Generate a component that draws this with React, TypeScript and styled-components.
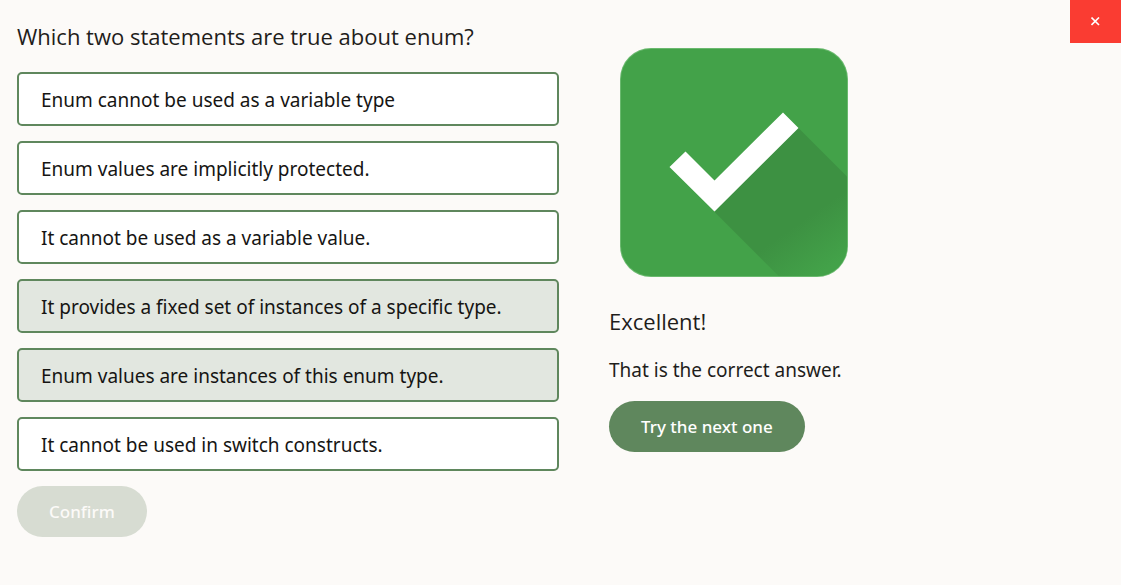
import React, { useState } from "react";
import styled, { createGlobalStyle } from "styled-components";

const GlobalStyle = createGlobalStyle`
  *, *::before, *::after { box-sizing: border-box; }
  body {
    margin: 0;
    background: #fcfaf8;
    color: #1f1d1b;
    font-family: "Noto Sans", "Open Sans", sans-serif;
  }
`;

const Page = styled.main`
  position: relative;
  display: grid;
  grid-template-columns: 542fr 462fr;
  column-gap: 50px;
  align-items: start;
  padding: 20px 50px 48px 17px;
`;

const CloseButton = styled.button`
  position: absolute;
  top: 0;
  right: 0;
  display: flex;
  align-items: center;
  justify-content: center;
  width: 51px;
  height: 43px;
  padding: 0;
  border: 0;
  background: #fa3c32;
  color: #fff;
  cursor: pointer;
`;

const Question = styled.section`
  display: flex;
  flex-direction: column;
  align-items: flex-start;
`;

const Title = styled.h1`
  margin: 0 0 20px;
  font-family: "Open Sans", "Noto Sans", sans-serif;
  font-size: 22px;
  line-height: 32px;
  font-weight: 400;
`;

const Options = styled.div`
  display: grid;
  gap: 15px;
  width: 100%;
  margin-bottom: 15px;
`;

const Option = styled.button<{ $selected: boolean }>`
  padding: 11px 22px 9px;
  border: 2px solid #5f875d;
  border-radius: 5px;
  background: ${(p) => (p.$selected ? "#e2e7e0" : "#fff")};
  color: #161513;
  font-family: inherit;
  font-size: 19px;
  line-height: 30px;
  text-align: left;
  cursor: pointer;
`;

const PillButton = styled.button`
  padding: 12px 32px;
  border: 0;
  border-radius: 26px;
  background: #5f875d;
  color: #fff;
  font-family: inherit;
  font-size: 17px;
  line-height: 27px;
  font-weight: 500;
  cursor: pointer;

  &:disabled {
    background: #d7dcd2;
    color: #fcfaf8;
    cursor: default;
  }
`;

const Result = styled.section`
  display: flex;
  flex-direction: column;
  align-items: flex-start;
  padding-top: 28px;
`;

const Badge = styled.svg`
  display: block;
  width: 228px;
  height: 229px;
  margin: 0 0 28px 11px;
`;

const ResultTitle = styled(Title).attrs({ as: "h2" })`
  margin-bottom: 18px;
`;

const ResultText = styled.p`
  margin: 0 0 16px;
  font-size: 19px;
  line-height: 30px;
`;

const options = [
  "Enum cannot be used as a variable type",
  "Enum values are implicitly protected.",
  "It cannot be used as a variable value.",
  "It provides a fixed set of instances of a specific type.",
  "Enum values are instances of this enum type.",
  "It cannot be used in switch constructs.",
];

function CorrectBadge() {
  return (
    <Badge viewBox="0 0 228 229" role="img" aria-label="Correct">
      <defs>
        <linearGradient id="shade" gradientUnits="userSpaceOnUse" x1="136" y1="122" x2="206" y2="222">
          <stop offset="0" stopColor="#3d9142" />
          <stop offset="0.56" stopColor="#3d9142" />
          <stop offset="1" stopColor="#43a249" />
        </linearGradient>
        <clipPath id="tile">
          <rect x="1" y="1" width="226" height="227" rx="30" />
        </clipPath>
      </defs>
      <rect width="228" height="229" rx="31" fill="#6ab96e" />
      <g clipPath="url(#tile)">
        <rect width="228" height="229" fill="#43a249" />
        <path d="M94 163.500L178 79.500L228 129.500V229H159.500Z" fill="url(#shade)" />
      </g>
      <path d="M49.500 119L65.500 103.500L94.500 132.500L163 64.500L178.500 80L94.500 163.500Z" fill="#fff" />
    </Badge>
  );
}

export default function App() {
  const [selected, setSelected] = useState<number[]>([3, 4]);
  const toggle = (i: number) =>
    setSelected((s) => (s.includes(i) ? s.filter((n) => n !== i) : [...s, i]));

  return (
    <>
      <GlobalStyle />
      <Page>
        <Question>
          <Title id="question">Which two statements are true about enum?</Title>
          <Options role="group" aria-labelledby="question">
            {options.map((text, i) => (
              <Option
                key={text}
                type="button"
                $selected={selected.includes(i)}
                aria-pressed={selected.includes(i)}
                onClick={() => toggle(i)}
              >
                {text}
              </Option>
            ))}
          </Options>
          <PillButton type="button" disabled>
            Confirm
          </PillButton>
        </Question>
        <Result>
          <CorrectBadge />
          <ResultTitle>Excellent!</ResultTitle>
          <ResultText>That is the correct answer.</ResultText>
          <PillButton type="button">Try the next one</PillButton>
        </Result>
        <CloseButton type="button" aria-label="Close">
          <svg width="9" height="9" viewBox="0 0 9 9" aria-hidden="true">
            <path d="M0.500 0.500L8 8M8 0.500L0.500 8" stroke="currentColor" strokeWidth="1.600" />
          </svg>
        </CloseButton>
      </Page>
    </>
  );
}
